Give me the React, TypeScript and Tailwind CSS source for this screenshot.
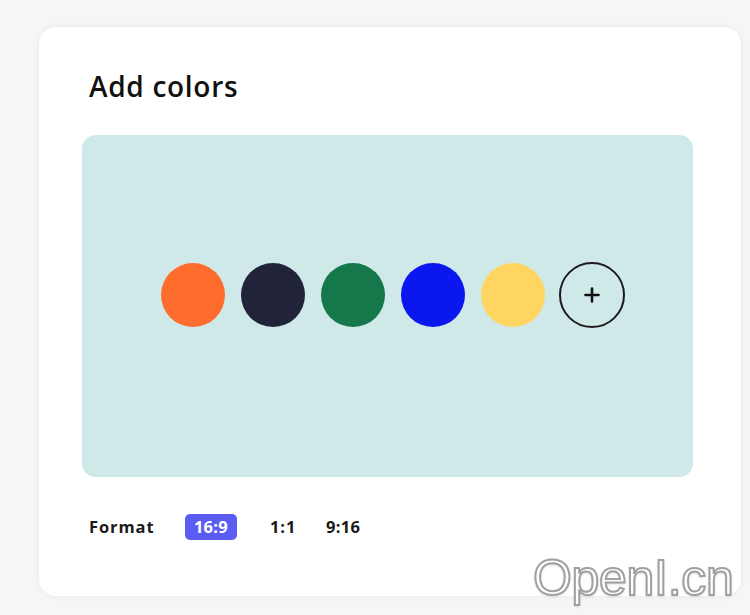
import React from "react";

const colors = ["#ff6d2e", "#21233a", "#14784a", "#0a17ee", "#ffd561"];

export default function App() {
  return (
    <div
      className="relative w-[750px] h-[615px] bg-[#f6f6f6] overflow-hidden"
      style={{ fontFamily: "'Open Sans', Inter, sans-serif" }}
    >
      <div className="absolute left-[38px] top-[26px] w-[704px] h-[571px] bg-white rounded-[18px] shadow-[0_0_6px_rgba(0,0,0,0.04)] border border-[#f0f0f0] flex flex-col pl-[43px] pr-[48px]">
        <h1 className="mt-[42px] ml-[7px] text-[28px] leading-[34px] font-semibold text-[#111] tracking-[0.7px]">
          Add colors
        </h1>
        <div className="mt-[32px] w-[611px] h-[342px] rounded-[14px] bg-[#cfe9e9] flex items-center justify-center gap-[16px] pl-[10px] pb-[22px]">
          {colors.map((c) => (
            <div key={c} className="w-[64px] h-[64px] rounded-full" style={{ backgroundColor: c }} />
          ))}
          <div className="ml-[-2px] w-[66px] h-[66px] rounded-full border-2 border-[#1c1c1c] flex items-center justify-center">
            <svg width="20" height="20" viewBox="0 0 20 20">
              <path d="M10 3.5v13M3.5 10h13" stroke="#111" strokeWidth="2.6" strokeLinecap="round" />
            </svg>
          </div>
        </div>
        <div className="mt-[37px] ml-[7px] flex items-center text-[16.5px] font-bold text-[#1a1a1a] tracking-[0.9px]">
          <span className="w-[96px]">Format</span>
          <span className="w-[52px] h-[26px] flex items-center justify-center rounded-[5px] bg-[#5a5cf2] text-white tracking-[0.3px]">16:9</span>
          <span className="ml-[33px] w-[56px]">1:1</span>
          <span className="tracking-[0.3px]">9:16</span>
        </div>
      </div>
      <div
        className="absolute left-[533px] top-[553px] text-[50px] leading-none font-normal text-white tracking-[-0.3px]"
        style={{
          fontFamily: "'Liberation Sans', Arial, sans-serif",
          WebkitTextStroke: "2px #a0a0a0",
          textShadow: "0 1px 3px rgba(0,0,0,0.25)",
        }}
      >
        OpenI.cn
      </div>
    </div>
  );
}
